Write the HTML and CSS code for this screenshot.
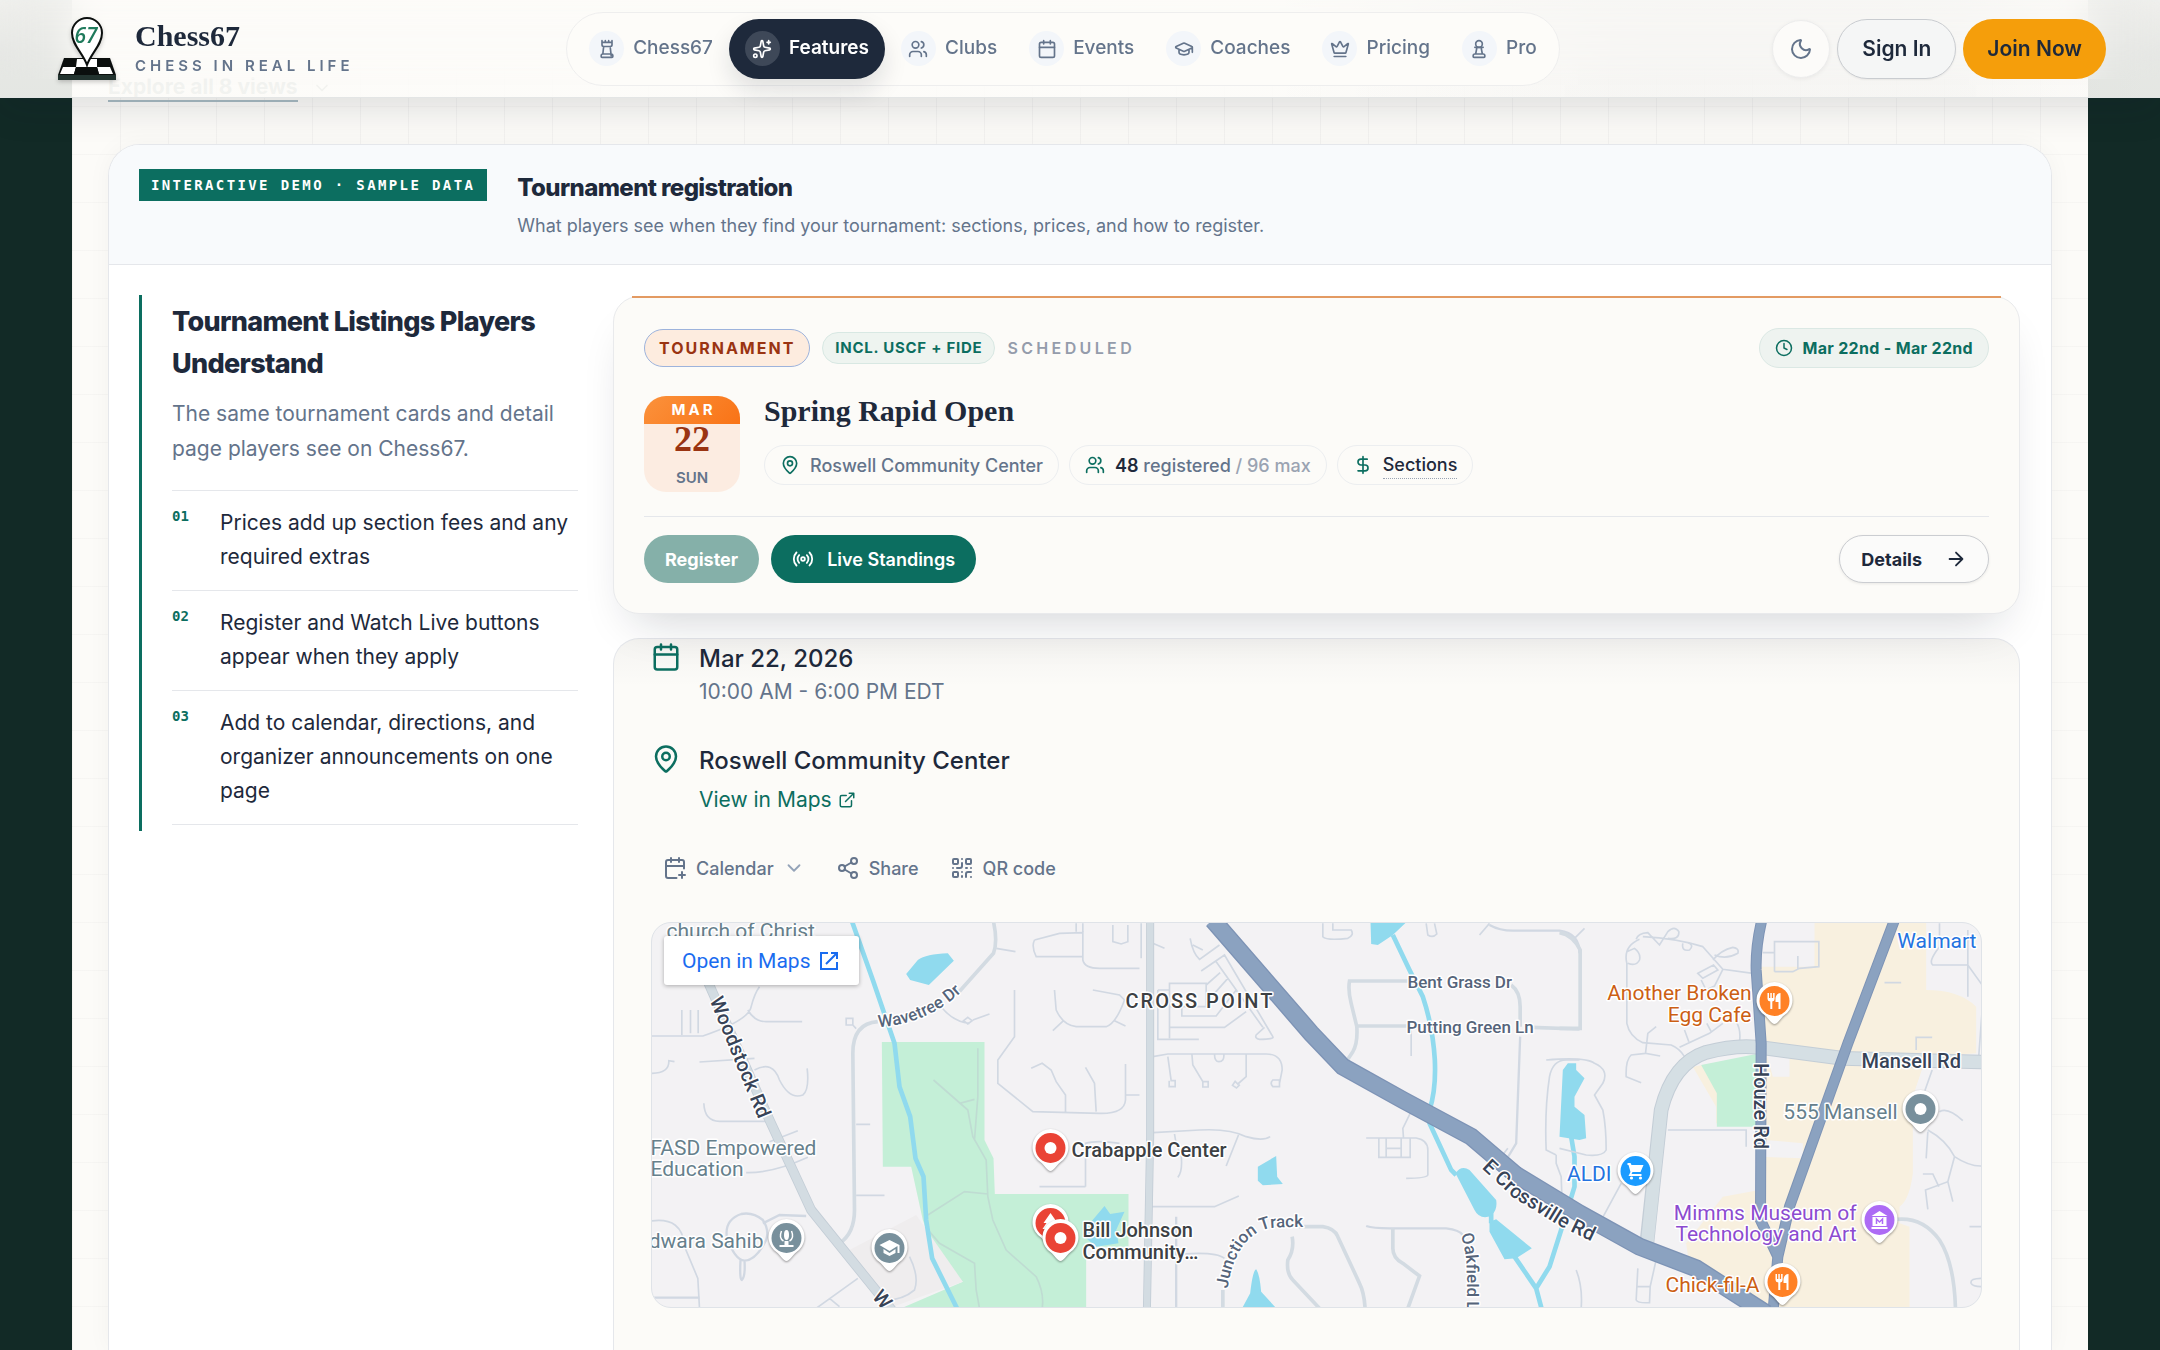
FILE: index.html
```html
<!DOCTYPE html>
<html lang="en">
<head>
<meta charset="utf-8">
<meta name="viewport" content="width=device-width, initial-scale=1">
<title>Chess67 Features</title>
<link rel="stylesheet" href="styles.css">
</head>
<body>
<svg class="sprite" aria-hidden="true">
  <symbol id="rook" viewBox="0 0 24 24"><path d="M5 20a2 2 0 0 1 2-2h10a2 2 0 0 1 2 2v1a1 1 0 0 1-1 1H6a1 1 0 0 1-1-1z M10 2v2 M14 2v2 m3 16-1-9 M6 2v5a2 2 0 0 0 2 2h8a2 2 0 0 0 2-2V2 M6 4h12 M7 18l1-9"/></symbol>
  <symbol id="sparkles" viewBox="0 0 24 24"><path d="M11.017 2.814a1 1 0 0 1 1.966 0l1.051 5.558a2 2 0 0 0 1.594 1.594l5.558 1.051a1 1 0 0 1 0 1.966l-5.558 1.051a2 2 0 0 0-1.594 1.594l-1.051 5.558a1 1 0 0 1-1.966 0l-1.051-5.558a2 2 0 0 0-1.594-1.594l-5.558-1.051a1 1 0 0 1 0-1.966l5.558-1.051a2 2 0 0 0 1.594-1.594z M20 2v4 M22 4h-4"/><circle cx="4" cy="20" r="2"/></symbol>
  <symbol id="users" viewBox="0 0 24 24"><path d="M16 21v-2a4 4 0 0 0-4-4H6a4 4 0 0 0-4 4v2 M16 3.128a4 4 0 0 1 0 7.744 M22 21v-2a4 4 0 0 0-3-3.87"/><circle cx="9" cy="7" r="4"/></symbol>
  <symbol id="calendar" viewBox="0 0 24 24"><path d="M8 2v4 M16 2v4 M3 10h18"/><rect x="3" y="4" width="18" height="18" rx="2"/></symbol>
  <symbol id="cap" viewBox="0 0 24 24"><path d="M21.42 10.922a1 1 0 0 0-.019-1.838L12.83 5.18a2 2 0 0 0-1.66 0L2.6 9.08a1 1 0 0 0 0 1.832l8.57 3.908a2 2 0 0 0 1.66 0z M22 10v6 M6 12.5V16a6 3 0 0 0 12 0v-3.5"/></symbol>
  <symbol id="crown" viewBox="0 0 24 24"><path d="M11.562 3.266a.5.5 0 0 1 .876 0L15.39 8.87a1 1 0 0 0 1.516.294L21.183 5.5a.5.5 0 0 1 .798.519l-2.834 10.246a1 1 0 0 1-.956.734H5.81a1 1 0 0 1-.957-.734L2.02 6.02a.5.5 0 0 1 .798-.519l4.276 3.664a1 1 0 0 0 1.516-.294z M5 21h14"/></symbol>
  <symbol id="pawn" viewBox="0 0 24 24"><path d="M5 20a2 2 0 0 1 2-2h10a2 2 0 0 1 2 2v1a1 1 0 0 1-1 1H6a1 1 0 0 1-1-1z M14.5 10l1.5 8 M7 10h10 M8 18l1.5-8"/><circle cx="12" cy="6" r="4"/></symbol>
  <symbol id="moon" viewBox="0 0 24 24"><path d="M20.985 12.486a9 9 0 1 1-9.473-9.472c.405-.022.617.46.402.803a6 6 0 0 0 8.268 8.268c.344-.215.825-.004.803.401"/></symbol>
  <symbol id="place" viewBox="0 0 24 24"><path d="M20 10c0 4.993-5.539 10.193-7.399 11.799a1 1 0 0 1-1.202 0C9.539 20.193 4 14.993 4 10a8 8 0 0 1 16 0"/><circle cx="12" cy="10" r="3"/></symbol>
  <symbol id="dollar" viewBox="0 0 24 24"><path d="M12 2v20 M17 5H9.5a3.5 3.5 0 0 0 0 7h5a3.5 3.5 0 0 1 0 7H6"/></symbol>
  <symbol id="radio" viewBox="0 0 24 24"><path d="M4.9 19.1C1 15.2 1 8.8 4.9 4.9 M7.8 16.2c-2.3-2.3-2.3-6.1 0-8.5 M16.2 7.8c2.3 2.3 2.3 6.1 0 8.5 M19.1 4.9C23 8.8 23 15.1 19.1 19"/><circle cx="12" cy="12" r="2"/></symbol>
  <symbol id="clock" viewBox="0 0 24 24"><circle cx="12" cy="12" r="10"/><path d="M12 6v6l4 2"/></symbol>
  <symbol id="arrow" viewBox="0 0 24 24"><path d="M5 12h14 M12 5l7 7-7 7"/></symbol>
  <symbol id="external" viewBox="0 0 24 24"><path d="M15 3h6v6 M10 14 21 3 M18 13v6a2 2 0 0 1-2 2H5a2 2 0 0 1-2-2V8a2 2 0 0 1 2-2h6"/></symbol>
  <symbol id="calendar-plus" viewBox="0 0 24 24"><path d="M16 19h6 M16 2v4 M19 16v6 M21 12.598V6a2 2 0 0 0-2-2H5a2 2 0 0 0-2 2v14a2 2 0 0 0 2 2h8.5 M3 10h18 M8 2v4"/></symbol>
  <symbol id="chevron" viewBox="0 0 24 24"><path d="m6 9 6 6 6-6"/></symbol>
  <symbol id="share" viewBox="0 0 24 24"><circle cx="18" cy="5" r="3"/><circle cx="6" cy="12" r="3"/><circle cx="18" cy="19" r="3"/><path d="M8.59 13.51l6.83 3.98 M15.41 6.51l-6.82 3.98"/></symbol>
  <symbol id="qr" viewBox="0 0 24 24"><rect x="3" y="3" width="5" height="5" rx="1"/><rect x="16" y="3" width="5" height="5" rx="1"/><rect x="3" y="16" width="5" height="5" rx="1"/><path d="M21 16h-3a2 2 0 0 0-2 2v3 M21 21v.01 M12 7v3a2 2 0 0 1-2 2H7 M3 12h.01 M12 3h.01 M12 16v.01 M16 12h1 M21 12v.01 M12 21v-1"/></symbol>
</svg>

<header class="topbar">
  <a class="brand" href="#">
    <svg class="brand-mark" viewBox="0 0 60 64" aria-hidden="true">
      <path d="M7 41H53L59 58V63H1V58z" fill="#0b0f0e"/>
      <path d="M20 42H40V50H19z M6 50H19L17 57H3z M40 50H53L56 57H42z" fill="#fff"/>
      <path d="M19 50H40L42 57H17z" fill="#0b0f0e"/>
      <path d="M1 58H59V63H1z" fill="#22332f"/>
      <path d="M30 48C26 36 15 28 15 16a15 15 0 0 1 30 0C45 28 34 36 30 48z" fill="#fff" stroke="#0b0f0e" stroke-width="2"/>
      <text x="29" y="26" text-anchor="middle" class="brand-number">67</text>
    </svg>
    <span class="brand-text">
      <span class="brand-name">Chess67</span>
      <span class="brand-tag">CHESS IN REAL LIFE</span>
    </span>
  </a>
  <nav class="nav" aria-label="Main">
    <a class="nav-item" href="#"><span class="nav-icon"><svg class="icon i20"><use href="#rook"/></svg></span>Chess67</a>
    <a class="nav-item active" href="#" aria-current="page"><span class="nav-icon"><svg class="icon i20"><use href="#sparkles"/></svg></span>Features</a>
    <a class="nav-item" href="#"><span class="nav-icon"><svg class="icon i20"><use href="#users"/></svg></span>Clubs</a>
    <a class="nav-item" href="#"><span class="nav-icon"><svg class="icon i20"><use href="#calendar"/></svg></span>Events</a>
    <a class="nav-item" href="#"><span class="nav-icon"><svg class="icon i20"><use href="#cap"/></svg></span>Coaches</a>
    <a class="nav-item" href="#"><span class="nav-icon"><svg class="icon i20"><use href="#crown"/></svg></span>Pricing</a>
    <a class="nav-item" href="#"><span class="nav-icon"><svg class="icon i20"><use href="#pawn"/></svg></span>Pro</a>
  </nav>
  <div class="account">
    <button class="theme" type="button" aria-label="Dark mode"><svg class="icon i24"><use href="#moon"/></svg></button>
    <button class="signin" type="button">Sign In</button>
    <button class="join" type="button">Join Now</button>
  </div>
</header>

<main class="sheet">
  <a class="explore" href="#"><span>Explore all 8 views</span><svg class="icon i20"><use href="#chevron"/></svg></a>

  <section class="demo">
    <header class="demo-head">
      <span class="demo-badge">INTERACTIVE DEMO · SAMPLE DATA</span>
      <div>
        <h2>Tournament registration</h2>
        <p>What players see when they find your tournament: sections, prices, and how to register.</p>
      </div>
    </header>

    <div class="demo-body">
      <aside class="notes">
        <h3>Tournament Listings Players Understand</h3>
        <p>The same tournament cards and detail page players see on Chess67.</p>
        <ol>
          <li><b>01</b><span>Prices add up section fees and any required extras</span></li>
          <li><b>02</b><span>Register and Watch Live buttons appear when they apply</span></li>
          <li><b>03</b><span>Add to calendar, directions, and organizer announcements on one page</span></li>
        </ol>
      </aside>

      <div class="cards">
        <article class="event">
          <div class="event-top">
            <span class="tag-type">TOURNAMENT</span>
            <span class="tag-rated">INCL. USCF + FIDE</span>
            <span class="tag-status">SCHEDULED</span>
            <span class="dates"><svg class="icon i18"><use href="#clock"/></svg>Mar 22nd - Mar 22nd</span>
          </div>
          <div class="event-main">
            <div class="tile"><span class="tile-month">MAR</span><span class="tile-day">22</span><span class="tile-week">SUN</span></div>
            <div class="event-info">
              <h3>Spring Rapid Open</h3>
              <div class="chips">
                <span class="chip"><svg class="icon i20"><use href="#place"/></svg>Roswell Community Center</span>
                <span class="chip"><svg class="icon i20"><use href="#users"/></svg><span><b>48</b> registered <i>/ 96 max</i></span></span>
                <button class="chip" type="button"><svg class="icon i20"><use href="#dollar"/></svg><span class="dotted">Sections</span></button>
              </div>
            </div>
          </div>
          <div class="event-actions">
            <button class="btn muted" type="button" disabled>Register</button>
            <button class="btn solid" type="button"><svg class="icon i22"><use href="#radio"/></svg>Live Standings</button>
            <a class="btn outline" href="#">Details<svg class="icon i22"><use href="#arrow"/></svg></a>
          </div>
        </article>

        <article class="detail">
          <div class="fact">
            <svg class="icon i30"><use href="#calendar"/></svg>
            <div><strong>Mar 22, 2026</strong><p>10:00 AM - 6:00 PM EDT</p></div>
          </div>
          <div class="fact">
            <svg class="icon i30"><use href="#place"/></svg>
            <div><strong>Roswell Community Center</strong><a class="maplink" href="#">View in Maps<svg class="icon i18"><use href="#external"/></svg></a></div>
          </div>
          <div class="tools">
            <button type="button"><svg class="icon i24"><use href="#calendar-plus"/></svg>Calendar<svg class="icon i22 faint"><use href="#chevron"/></svg></button>
            <button type="button"><svg class="icon i24"><use href="#share"/></svg>Share</button>
            <button type="button"><svg class="icon i24"><use href="#qr"/></svg>QR code</button>
          </div>

          <div class="map">
            <svg class="map-art" viewBox="652 923 1330 384" preserveAspectRatio="xMidYMid slice" role="img" aria-label="Map around Roswell Community Center">
              <defs>
                <g id="pin"><path class="pin-shell" d="M0 23C-3 23-6 17-10 14A18 18 0 1 1 10 14C6 17 3 23 0 23z"/><circle r="15"/></g>
                <g id="fork" fill="#fff"><path d="M-7-8h1.500v5h1.300v-5h1.500v5h1.300v-5h1.500v6q0 2-2.300 2.500V8h-2V.5Q-7 0-7-2z M6-8V8H4V1H1V-3Q2-8 6-8z"/></g>
                <path id="p-wood" d="M710 1000L758 1117"/>
                <path id="p-wave" d="M879 1027Q930 1024 966 988"/>
                <path id="p-cross" d="M1482 1168L1513 1197L1562 1227L1610 1250"/>
                <path id="p-junc" d="M1228 1289Q1236 1236 1270 1228Q1284 1227 1310 1227"/>
                <path id="p-oak" d="M1461 1235Q1467 1250 1467 1270L1467 1340"/>
              </defs>
              <!-- west side -->
              <g transform="translate(640 910) scale(.333333)">
                <path class="park" d="M727 396H1035V690L1062 745L1066 852H1467V1010H1340V1210H750L970 1115L885 1030L850 930L815 770H730z"/>
                <path class="block" d="M630 1020L830 915L970 1115L760 1190z"/>
                <path class="water" d="M800 192L835 150Q860 132 925 130L943 152L868 225L812 210z M1355 935L1395 888L1412 912L1455 905L1430 960L1437 1000L1370 1010L1340 985z"/>
                <path class="line minor" d="M35 378H190Q330 330 335 290Q345 250 360 230 M325 300Q345 335 380 335H488 M127 300V375 M153 300V370 M176 300V370 M35 490Q90 490 88 452L105 455 M180 456L345 445 M345 480Q400 450 420 510Q450 570 490 555Q510 540 503 475 M193 580Q195 634 240 634H385 M390 695L475 662 M320 788Q400 790 505 742 M35 933Q130 920 135 1010L175 1105L180 1195 M650 643H692 M650 856H735 M530 1195L655 1105 M570 1165L600 1190 M1070 115L1128 125 M620 325h20v20h-20z M640 345L650 356 M905 290Q940 335 990 340 M985 322l13 10l-13 10l-13-10z M1000 330L1050 312 M1125 240V380L1075 450V520L1180 605L1380 610Q1455 612 1458 570V462 M1458 555H1500 M1245 240L1250 300Q1270 345 1310 350H1400Q1430 340 1455 270L1440 255L1360 240 M1272 332L1240 362 M1425 332L1458 348 M1175 475L1208 460L1235 480L1250 515L1278 555V605 M1338 472L1365 520L1370 605 M1185 90L1260 70L1330 68V140H1190Q1175 110 1185 90 M1310 40V65 M1330 40V150Q1335 175 1380 175H1500 M1420 45V95L1445 102L1465 95V45 M1338 830H1200 M1338 830V700Q1370 690 1440 700 M810 1040Q840 1100 825 1140Q790 1170 740 1170"/>
                <path class="line minor wide" d="M305 912Q255 930 262 980Q285 1050 315 1052Q350 1050 380 990Q390 960 370 930Q340 905 305 912 M370 940L420 915L500 918 M303 1050Q300 1110 307 1110Q318 1100 315 1052 M35 1163H180"/>
                <path class="line track" d="M882 510L985 600L1000 680L1040 750L1045 860L1060 930L1100 1020L1190 1100Q1215 1150 1208 1195 M960 580L1005 568 M1015 415V560L1005 690 M865 915L975 845L1045 852 M870 965L900 1000L1005 1060L1010 1140L1020 1195"/>
                <path class="line river" d="M636 30L700 210L765 400L780 530L812 620L828 745L852 800L860 930L878 1045L960 1210"/>
                <path class="line local" d="M1062 35Q1075 95 1062 130L955 250 M715 335Q640 340 640 430L645 900Q645 970 600 1000"/>
                <path class="line arterial-edge" d="M205 215L390 630L515 900L765 1210"/>
                <path class="line arterial" d="M205 215L390 630L515 900L765 1210"/>
              </g>
              <!-- centre -->
              <g transform="translate(1100 910) scale(.333333)">
                <path class="water" d="M813 35H922L880 75L835 105L815 102z M475 770L530 738L533 800L550 822L490 826L475 812z M425 1200L452 1150Q460 1080 470 1078Q480 1090 485 1145L535 1200z M1068 790Q1085 765 1110 780L1190 870Q1195 900 1175 918Q1140 930 1125 900z M1170 935L1190 928L1297 1015L1250 1045L1215 1048L1170 965z"/>
                <path class="line minor" d="M160 100L195 115 M125 40V145 M272 85Q280 130 300 148L360 105 M280 105L310 120 M305 183L375 135L520 380Q525 388 480 388Q465 385 470 375L495 352 M350 155L490 352 M210 220H320V290H210z M210 290V352H375L440 305 M247 285V318H350L410 240 M175 240V388H298 M175 240H210V385 M320 225L362 188 M345 250L385 205 M160 440L205 432H500Q548 432 548 480L540 520 M205 440L215 512h12v18h-18v-18 M277 430L280 465L310 515h16v16h-16v-16 M440 432V500L415 522l-8 -8l-8 12l12 8l10-10 M345 432Q345 455 358 455Q375 455 373 432 M540 510h-20q-10 10 0 20h20z M160 668L300 660Q390 655 440 680Q490 695 512 680 M225 672Q230 710 245 735Q250 785 235 802 M417 675L380 768 M155 890H345L418 858 M250 1032Q350 1025 375 1045 M670 40V80Q680 92 745 85Q765 75 755 60H700V40 M980 40L985 75Q1000 85 1012 72L1005 40 M800 684H950Q985 690 985 720V795Q980 805 920 805 M838 684V742H932V684 M860 684V742 M905 684V742 M860 715H905 M912 684L910 655L932 610 M935 360V438 M1170 40L1140 75 M1370 735L1340 720Q1335 600 1350 500Q1360 450 1400 450H1440 M1370 735V760L1385 800L1388 880 M1225 715L1190 760"/>
                <path class="line minor wide" d="M1170 45Q1200 62 1240 62H1380Q1440 70 1440 130 M800 948Q820 955 870 955H1040Q1080 960 1090 975 M230 920V1195 M1262 380L1250 700L1220 750"/>
                <path class="line local" d="M930 213H750Q745 240 755 280L772 350Q775 400 760 425L740 455 M772 348H930 M1295 352L1440 357 M1235 225Q1262 245 1262 290V350 M598 950H670Q705 955 715 980L780 1120Q795 1150 797 1200 M578 980Q585 1020 565 1050Q560 1090 580 1110L660 1195 M880 955V1015Q880 1045 910 1060L960 1098L925 1195 M370 1140V1195"/>
                <path class="line road-edge" d="M152 30V680L142 1210"/>
                <path class="line road" d="M152 30V680L142 1210"/>
                <path class="line river" d="M880 75L930 180L970 260Q1000 350 1006 450Q1010 540 990 600V640L1055 780L1070 795 M1175 910V940 M1245 1040L1310 1135L1330 1210 M1415 680L1425 740V830L1385 960L1350 1070L1310 1135"/>
              </g>
              <!-- east side -->
              <g transform="translate(1560 910) scale(.333333)">
                <path class="shop" d="M765 30H1100V240Q1200 240 1250 290V430L1100 440L1060 560V790Q1050 870 1020 890V940L1050 950V1210H660L390 1070V980L600 860V740L730 745V700L620 690V640H470V590L400 470L620 430L640 500H690V440L600 420V170H765z"/>
                <path class="shop" d="M380 1000L490 860L600 840V1120L390 1070z"/>
                <path class="park" d="M425 465L590 432V650H472V550z"/>
                <path class="water" d="M10 480L25 460H50V480L75 505L45 560V590L75 615L80 685L60 690L0 680z"/>
                <path class="line minor" d="M75 55L45 85 M240 88Q190 110 202 160V340Q210 380 250 398L335 405Q360 415 375 440 M230 88Q235 70 265 68L300 105L325 65Q345 45 358 65Q360 90 325 85 M370 100Q365 125 390 120Q405 105 385 98 M202 125L225 115Q245 130 240 150Q230 170 205 160 M250 80Q350 85 430 110L490 178L580 190 M460 150Q485 120 520 112Q540 115 535 130Q500 150 465 135 M415 190L462 165L475 180L430 205z M490 178L465 228L440 240 M440 240L425 210 M290 350L265 370L258 430L302 438 M258 430L215 435Q198 450 200 500L245 518 M360 412L450 370L490 340 M375 360L388 395 M442 340L455 365 M530 335Q545 360 540 395 M645 185V95H778V170L720 175L700 185H645 M715 138V178 M610 128H645 M975 218H1025 M1070 420V382H1118 M1140 40V110Q1105 155 1120 165H1225L1268 225 M1225 60V260 M1268 300L1258 435 M1118 480L1095 545 M325 660H560V710 M185 820L120 940 M1140 605Q1165 590 1210 632 M1105 660Q1160 690 1185 740Q1230 770 1268 768 M1105 665L1100 745 M1185 740L1165 815L1098 840L1105 898 M1165 815L1180 875 M1090 792H1120L1138 830 M1230 950H1268 M1268 1105Q1230 1105 1235 1120Q1240 1130 1268 1130 M50 1080Q70 1130 65 1195 M235 1075L230 1170Q235 1180 270 1178L272 1130H232 M272 1130L292 1040 M-40 450Q80 440 105 460Q150 480 130 520L105 555L130 600Q140 650 140 720Q130 740 80 735L0 715"/>
                <path class="line local" d="M0 68Q40 75 62 120V355H0 M1010 928Q1090 920 1140 990Q1185 1060 1188 1200"/>
                <path class="line parkway-edge" d="M262 1000L305 600Q340 460 440 427Q540 400 620 415L850 445L1300 457"/>
                <path class="line parkway" d="M262 1010L305 600Q340 460 440 427Q540 400 620 415L850 445L1300 457"/>
                <path class="line highway-edge" d="M607 30Q588 110 590 180L605 400L603 930L655 1040L640 1210 M1005 30L865 400L690 890L655 1040"/>
                <path class="line highway" d="M607 30Q588 110 590 180L605 400L603 930L655 1040L640 1210 M1005 30L865 400L690 890L655 1040"/>
                <path class="line crossville-edge" d="M-1040 30L-745 370L-650 470L-470 570L-265 680L-130 795L60 910L240 1010L410 1075L620 1210"/>
                <path class="line crossville" d="M-1040 30L-745 370L-650 470L-470 570L-265 680L-130 795L60 910L240 1010L410 1075L620 1210"/>
              </g>

              <g class="label poi slate">
                <text x="667" y="938">church of Christ</text>
                <text x="651" y="1155">FASD Empowered</text><text x="651" y="1176">Education</text>
                <text x="764" y="1248" text-anchor="end">dwara Sahib</text>
                <text x="1898" y="1119" text-anchor="end">555 Mansell</text>
              </g>
              <g class="label poi blue"><text x="1977" y="948" text-anchor="end">Walmart</text><text x="1612" y="1181" text-anchor="end">ALDI</text></g>
              <g class="label poi orange"><text x="1752" y="1000" text-anchor="end">Another Broken</text><text x="1752" y="1022" text-anchor="end">Egg Cafe</text><text x="1760" y="1292" text-anchor="end">Chick-fil-A</text></g>
              <g class="label poi purple"><text x="1857" y="1220" text-anchor="end">Mimms Museum of</text><text x="1857" y="1241" text-anchor="end">Technology and Art</text></g>
              <g class="label town"><text class="tracked" x="1126" y="1008">CROSS POINT</text><text x="1072" y="1157">Crabapple Center</text><text x="1083" y="1237">Bill Johnson</text><text x="1083" y="1259">Community…</text></g>
              <g class="label major">
                <text><textPath href="#p-wood">Woodstock Rd</textPath></text>
                <text><textPath href="#p-cross">E Crossville Rd</textPath></text>
                <text x="1862" y="1068">Mansell Rd</text>
                <text transform="translate(1754 1063) rotate(90)">Houze Rd</text>
                <text transform="translate(872 1297) rotate(50)">W</text>
              </g>
              <g class="label street">
                <text><textPath href="#p-wave">Wavetree Dr</textPath></text>
                <text><textPath href="#p-junc">Junction Track</textPath></text>
                <text><textPath href="#p-oak">Oakfield Ln</textPath></text>
                <text x="1408" y="988">Bent Grass Dr</text><text x="1407" y="1033">Putting Green Ln</text>
              </g>

              <g transform="translate(1051 1148)"><use href="#pin" fill="#ea4335"/><circle r="6" fill="#fff"/></g>
              <g transform="translate(1051 1223)"><use href="#pin" fill="#ea4335"/><path d="M0-10L7 0H4L8 6H1V9H-1V6H-8L-4 0H-7z" fill="#fff"/></g>
              <g transform="translate(1061 1238)"><use href="#pin" fill="#ea4335"/><circle r="6" fill="#fff"/></g>
              <g transform="translate(787 1238)"><use href="#pin" fill="#78909c"/><path d="M-7 7H7V9H-7z M-2 3H2V7H-2z" fill="#fff"/><ellipse cy="-3" rx="2.500" ry="5" fill="#fff"/><path d="M-5-7Q-8 0-3 3 M5-7Q8 0 3 3" fill="none" stroke="#fff" stroke-width="1.500"/></g>
              <g transform="translate(890 1248)"><use href="#pin" fill="#78909c"/><path d="M0-8L10-3V5H8V-2L0 3L-10-3z M-6 1L0 5L6 1V5L0 8L-6 5z" fill="#fff"/></g>
              <g transform="translate(1921 1109)"><use href="#pin" fill="#78909c"/><circle r="6" fill="#fff"/></g>
              <g transform="translate(1636 1171)"><use href="#pin" fill="#1a9bff"/><path d="M-8-8H-5L-4-6H8L5 1H-3L-4 3H6V5H-7L-5 1L-7-6H-8z" fill="#fff"/><circle cx="-4" cy="7" r="1.600" fill="#fff"/><circle cx="5" cy="7" r="1.600" fill="#fff"/></g>
              <g transform="translate(1880 1220)"><use href="#pin" fill="#ad6bf5"/><path d="M0-9L8-4H-8z M-7-3H7V6H-7z M-8 7H8V9H-8z" fill="#fff"/><path d="M-3 4V-1L0 2L3-1V4" fill="none" stroke="#ad6bf5" stroke-width="1.500"/></g>
              <g transform="translate(1775 1001)"><use href="#pin" fill="#ff8126"/><use href="#fork"/></g>
              <g transform="translate(1783 1282)"><use href="#pin" fill="#ff8126"/><use href="#fork"/></g>
            </svg>
            <a class="open-maps" href="#">Open in Maps<svg class="open-icon" viewBox="0 0 18 18"><path d="M8 1H1V17H17V10 M11 1H17V7 M17 1L6 12"/></svg></a>
          </div>
        </article>
      </div>
    </div>
  </section>
</main>
</body>
</html>
```
FILE: styles.css
```css
* { box-sizing: border-box; }
:root {
  --ink: #1e293b;
  --slate: #64748b;
  --green: #0c6e60;
  --paper: #fcfbf8;
  --line: #e5e7eb;
  --serif: "Liberation Serif", serif;
}
body {
  margin: 0;
  height: 100vh;
  overflow: hidden;
  display: flex;
  background: #122a26;
  color: var(--ink);
  font: 18px/1.5 Inter, sans-serif;
}
h2, h3, p, ol { margin: 0; padding: 0; }
a { color: inherit; text-decoration: none; }
button { font: inherit; color: inherit; background: none; border: 0; padding: 0; }
.sprite { position: absolute; width: 0; height: 0; }
.icon { flex: none; fill: none; stroke: currentColor; stroke-width: 2; stroke-linecap: round; stroke-linejoin: round; }
.i18 { width: 18px; height: 18px; }
.i20 { width: 20px; height: 20px; }
.i22 { width: 22px; height: 22px; }
.i24 { width: 24px; height: 24px; }
.i30 { width: 30px; height: 30px; }

/* Top bar */
.topbar {
  position: fixed;
  inset: 0 0 auto;
  z-index: 2;
  height: 98px;
  padding: 0 54px 0 57px;
  display: flex;
  justify-content: space-between;
  align-items: center;
  background:
    linear-gradient(90deg, transparent 58%, rgba(15,23,42,.025) 75%, rgba(15,23,42,.025) 90%, transparent),
    linear-gradient(rgba(252,251,248,.95), rgba(252,251,248,.91) 50%, rgba(252,251,248,.9));
  border-bottom: 1px solid #e3e5e5;
  box-shadow: 0 12px 36px rgba(15,23,42,.12);
}
.topbar::before { content: ""; position: absolute; inset: 0 0 18px; z-index: -1; backdrop-filter: blur(18px); }
.brand { display: flex; align-items: center; gap: 18px; }
.brand-mark { width: 60px; height: 64px; filter: drop-shadow(0 2px 2px rgba(0,0,0,.2)); }
.brand-number { font: italic 600 21px "Open Sans", sans-serif; fill: #1f7a5c; }
.brand-text { display: flex; flex-direction: column; }
.brand-name { font: bold 30px/34px var(--serif); }
.brand-tag { font-size: 15px; line-height: 26px; font-weight: 600; letter-spacing: 4px; color: var(--slate); }
.nav {
  height: 74px;
  padding: 0 6px;
  display: flex;
  align-items: center;
  border: 1px solid #eeeeee;
  border-radius: 37px;
  background: #fdfcf9;
}
.nav-item {
  height: 60px;
  padding: 0 16px;
  display: flex;
  align-items: center;
  gap: 9px;
  border-radius: 30px;
  font-size: 19px;
  font-weight: 500;
  color: var(--slate);
}
.nav-icon { width: 35px; height: 35px; border-radius: 50%; display: grid; place-items: center; background: #f3f6fa; }
.active { background: var(--ink); color: #fff; font-weight: 600; box-shadow: 0 12px 24px rgba(15,23,42,.12); }
.active .nav-icon { background: #3e4858; }
.account { display: flex; justify-content: flex-end; align-items: center; gap: 7px; }
.account button { height: 60px; border-radius: 30px; font-size: 21px; font-weight: 600; }
.account .theme { width: 58px; height: 58px; display: grid; place-items: center; background: #fcfbf9; border: 1px solid #ececec; color: var(--slate); box-shadow: 0 1px 4px rgba(0,0,0,.06); }
.account .signin { padding: 0 24px; border: 1px solid #c9ccd0; background: #f5f6f6; box-shadow: 0 1px 2px rgba(0,0,0,.06); }
.account .join { padding: 0 24px; background: #f59e0b; }

/* Page sheet */
.sheet {
  flex: 1;
  margin: 0 72px;
  padding: 73px 36px 0;
  display: flex;
  flex-direction: column;
  background:
    linear-gradient(90deg, rgba(15,23,42,.035) 1px, transparent 1px) 0 0 / 48px 48px,
    linear-gradient(rgba(15,23,42,.025) 1px, transparent 1px) 0 10px / 48px 48px,
    var(--paper);
}
.explore { align-self: flex-start; margin-bottom: 42px; display: flex; align-items: center; gap: 14px; color: #8fa09f; font-size: 21px; line-height: 27px; font-weight: 700; }
.explore span { border-bottom: 2px solid #a9bbc2; }
.demo {
  flex: 1;
  display: flex;
  flex-direction: column;
  background: #fff;
  border: 1px solid var(--line);
  border-bottom: 0;
  border-radius: 32px 32px 0 0;
  overflow: hidden;
  box-shadow: 0 0 24px rgba(15,23,42,.04);
}
.demo-head { height: 120px; padding: 24px 30px; display: flex; align-items: flex-start; gap: 30px; background: #f8fafc; border-bottom: 1px solid var(--line); }
.demo-badge { padding: 0 12px; background: var(--green); color: #fff; font: bold 14px/32px "DejaVu Sans Mono", monospace; letter-spacing: .17em; }
.demo-head h2 { font-size: 24px; line-height: 38px; font-weight: 800; letter-spacing: -.025em; }
.demo-head p { margin-top: 5px; line-height: 27px; color: var(--slate); }
.demo-body { flex: 1; padding: 30px 31px 0 30px; display: grid; grid-template-columns: 439px 1fr; gap: 35px; }

/* Notes column */
.notes { align-self: start; padding: 6px 0 6px 30px; border-left: 3px solid var(--green); }
.notes h3 { font-size: 27px; line-height: 42px; font-weight: 800; letter-spacing: -.025em; }
.notes > p { margin: 11px 0 24px; font-size: 21px; line-height: 35px; color: var(--slate); }
.notes ol { list-style: none; border-top: 1px solid var(--line); }
.notes li { display: flex; padding: 15px 0 16px; border-bottom: 1px solid var(--line); font-size: 21px; line-height: 34px; }
.notes b { flex: 0 0 48px; font: bold 14px/20px "DejaVu Sans Mono", monospace; color: var(--green); }

/* Event card */
.cards { display: flex; flex-direction: column; gap: 24px; min-width: 0; padding-top: 1px; }
.event {
  position: relative;
  padding: 30px;
  background: var(--paper);
  border: 1px solid #e9eaec;
  border-radius: 26px;
  box-shadow: 0 24px 48px -20px rgba(15,23,42,.2);
}
.event::before { content: ""; position: absolute; inset: -1px 18px auto; height: 2px; background: #e39a62; }
.event-top { display: flex; align-items: center; gap: 12px; height: 42px; }
.tag-type { padding: 0 14px; border: 1px solid #9db3dc; border-radius: 20px; background: #fdecdf; color: #9a3412; font-size: 16px; line-height: 36px; font-weight: 700; letter-spacing: 2px; }
.tag-rated { padding: 0 12px; border: 1px solid #d8e8e3; border-radius: 16px; background: #eef4f0; color: var(--green); font-size: 15px; line-height: 30px; font-weight: 700; letter-spacing: .05em; }
.tag-status { color: #949cab; font-size: 16px; font-weight: 600; letter-spacing: .21em; }
.dates { margin-left: auto; padding: 0 15px; display: flex; align-items: center; gap: 9px; border: 1px solid #dbe8e4; border-radius: 20px; background: #eef3f0; color: var(--green); font-size: 16px; line-height: 38px; font-weight: 700; letter-spacing: .02em; }
.event-main { display: flex; gap: 24px; padding: 27px 0 24px; }
.tile { width: 96px; height: 96px; display: flex; flex-direction: column; align-items: center; border-radius: 22px; overflow: hidden; background: #fcece1; }
.tile-month { width: 100%; text-align: center; background: linear-gradient(135deg, #fb923c, #f97316); color: #fff; font-size: 15px; line-height: 28px; font-weight: 700; letter-spacing: 3px; text-indent: 3px; }
.tile-day { font: bold 36px/30px var(--serif); color: #9a3412; }
.tile-week { margin-top: 12px; font-size: 15px; line-height: 24px; font-weight: 600; color: var(--slate); }
.event-info h3 { font: bold 30px/30px var(--serif); }
.chips { display: flex; gap: 10px; margin-top: 19px; }
.chip { height: 40px; padding: 0 15px; display: flex; align-items: center; gap: 10px; border: 1px solid #eceef0; border-radius: 20px; color: var(--slate); font-size: 18px; font-weight: 500; }
.chip .icon { color: var(--green); }
.chip b { color: var(--ink); font-weight: 600; }
.chip i { font-style: normal; color: #9aa3b2; }
.dotted { color: var(--ink); border-bottom: 1px dotted #9aa3b2; }
.event-actions { display: flex; gap: 12px; padding-top: 18px; border-top: 1px solid var(--line); }
.btn { height: 48px; padding: 0 21px; display: flex; align-items: center; border-radius: 24px; font-size: 18px; font-weight: 600; }
.muted { background: #85b0a9; color: #fff; font-weight: 700; }
.solid { gap: 13px; background: var(--green); color: #fff; }
.outline { margin-left: auto; gap: 23px; border: 1px solid #cbcdd1; background: #fbfbfa; box-shadow: 0 1px 3px rgba(0,0,0,.08); font-weight: 700; }

/* Detail card */
.detail {
  flex: 1;
  padding: 3px 37px 40px;
  display: flex;
  flex-direction: column;
  border: 1px solid var(--line);
  border-bottom: 0;
  border-radius: 26px 26px 0 0;
  background: linear-gradient(rgba(15,23,42,.03), transparent 48px), var(--paper);
}
.fact { display: flex; align-items: flex-start; gap: 18px; }
.fact + .fact { margin-top: 36px; }
.fact .icon { color: var(--green); }
.fact strong { display: block; font-size: 24px; line-height: 33px; font-weight: 500; }
.fact p { font-size: 21px; line-height: 33px; color: var(--slate); }
.maplink { display: flex; align-items: center; gap: 6px; margin-top: 6px; font-size: 21px; line-height: 33px; color: var(--green); }
.tools { display: flex; gap: 31px; margin-top: 31px; padding-left: 12px; color: var(--slate); }
.tools button { display: flex; align-items: center; gap: 9px; height: 42px; font-size: 18px; font-weight: 500; }
.faint { color: #94a3b8; }
.map { position: relative; height: 386px; margin-top: 33px; border: 1px solid #dfe3e8; border-radius: 20px; overflow: hidden; background: #f3f2f4; }
.map-art { display: block; width: 100%; height: 100%; }
.open-maps { position: absolute; left: 12px; top: 13px; height: 49px; padding: 0 21px 0 18px; display: flex; align-items: center; gap: 10px; background: #fff; border-radius: 3px; box-shadow: 0 1px 4px rgba(0,0,0,.3); color: #1a6cf0; font: 21px Roboto, sans-serif; }
.open-icon { width: 18px; height: 18px; fill: none; stroke: currentColor; stroke-width: 2; }

/* Map drawing */
.park { fill: #c4efd7; }
.block { fill: #efedee; }
.shop { fill: #f8f0df; }
.water { fill: #90daee; }
.line { fill: none; stroke-width: 5; }
.minor { stroke: #d1d8e2; }
.wide { stroke-width: 7; }
.track { stroke: #bfdcd2; }
.local { stroke: #d3dbe2; stroke-width: 11; }
.river { stroke: #90daee; stroke-width: 14; }
.arterial-edge { stroke: #c3cdd6; stroke-width: 30; }
.arterial { stroke: #d3dce2; stroke-width: 25; }
.road-edge { stroke: #c3cdd6; stroke-width: 24; }
.road { stroke: #d3dce2; stroke-width: 19; }
.parkway-edge { stroke: #c3cdd6; stroke-width: 44; }
.parkway { stroke: #d5dfe4; stroke-width: 38; }
.highway-edge { stroke: #7d93b5; stroke-width: 33; }
.highway { stroke: #8ba2c0; stroke-width: 27; }
.crossville-edge { stroke: #7d93b5; stroke-width: 54; }
.crossville { stroke: #8ba2c0; stroke-width: 46; }
.pin-shell { fill: #fff; filter: drop-shadow(0 1px 1px rgba(0,0,0,.4)); }
.label { font-family: Roboto, sans-serif; paint-order: stroke; stroke: #fff; stroke-width: 3px; stroke-linejoin: round; }
.poi { font-size: 21px; }
.slate { fill: #66808c; }
.blue { fill: #2473e0; }
.orange { fill: #cc5f14; }
.purple { fill: #8c4bd0; }
.town { font-size: 20px; font-weight: 500; fill: #3c4043; }
.tracked { letter-spacing: 2px; }
.major { font-size: 20px; font-weight: 500; fill: #374357; }
.street { font-size: 17px; font-weight: 500; fill: #55647a; }
```
